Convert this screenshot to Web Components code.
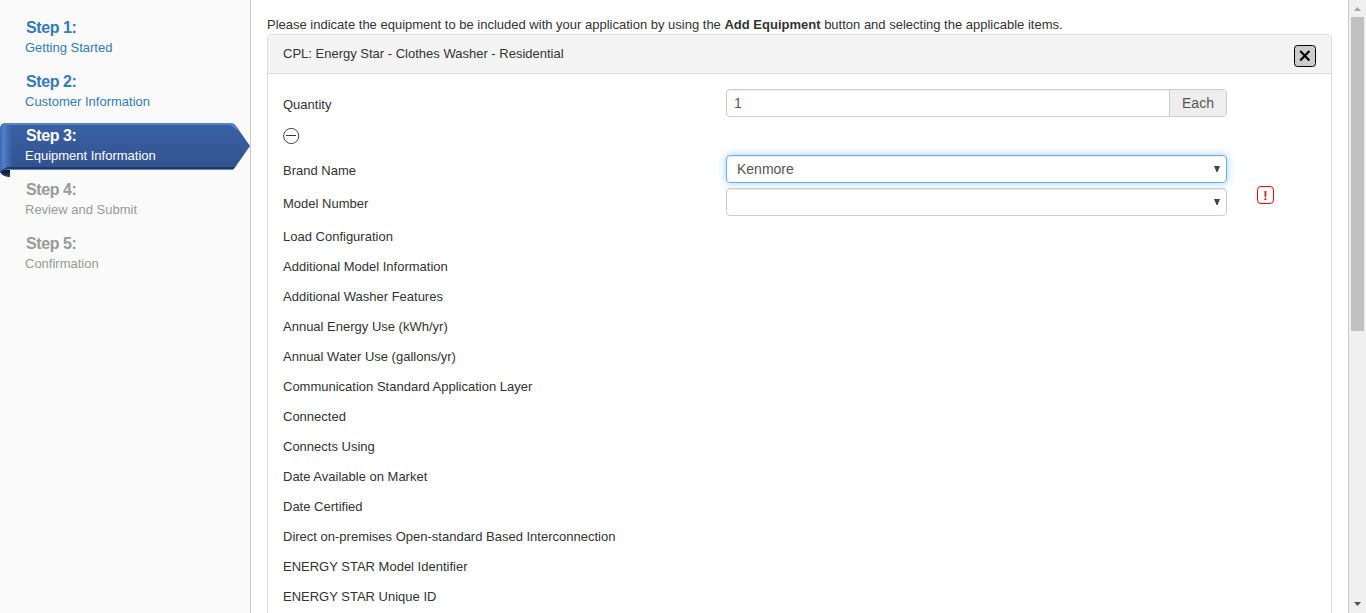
<!DOCTYPE html>
<html lang="en">
<head>
<meta charset="utf-8">
<title>Equipment Information</title>
<style>
html,body{margin:0;height:100%;overflow:hidden;background:#fff}
body{font:13px/18px "Liberation Sans",Arial,sans-serif;color:#333}
</style>
</head>
<body>
<application-page></application-page>
<script>
const define = (name, html) => {
  const template = document.createElement('template');
  template.innerHTML = html;
  customElements.define(name, class extends HTMLElement {
    constructor() {
      super();
      this.attachShadow({mode: 'open'}).append(template.content.cloneNode(true));
    }
  });
};

define('wizard-step', `
<style>
:host{display:block;position:relative;height:54px;color:#337ab7}
:host([pending]){color:#999}
:host([active]){color:#fff}
.text{position:relative;padding:3px 0 0 25px}
.title{display:block;font-weight:bold;font-size:16px;letter-spacing:-.4px;line-height:20px;height:20px;padding-left:1px}
.name{display:block;line-height:20px}
svg{display:none}
:host([active]) svg{display:block;position:absolute;left:0;top:-1px}
</style>
<svg width="250" height="55" viewBox="0 0 250 55">
  <defs>
    <linearGradient id="face" x2="0" y2="1"><stop offset="0" stop-color="#3a62a5"/><stop offset="1" stop-color="#30508c"/></linearGradient>
    <linearGradient id="curl"><stop offset="0" stop-color="#3e68b0"/><stop offset=".25" stop-color="#5280cb"/><stop offset=".6" stop-color="#4470b8" stop-opacity=".8"/><stop offset="1" stop-color="#365d9f" stop-opacity="0"/></linearGradient>
    <linearGradient id="fold" x2="0" y2="1"><stop offset="0" stop-color="#050d18"/><stop offset="1" stop-color="#29446f"/></linearGradient>
  </defs>
  <path d="M0 47H10V55H8Q2 54 0 50Z" fill="url(#fold)"/>
  <path d="M5 1H231Q234 1 236 4L250 24L236 44Q234 48 231 48H7Q2 48 0 51V6Q1 1 5 1Z" fill="url(#face)"/>
  <path d="M0 6Q1 2 5 2H14V46H6Q2 46 0 50Z" fill="url(#curl)"/>
  <path d="M4 2H231L237 7" fill="none" stroke="#5684cf" stroke-width="2"/>
  <path d="M7 45H235L233 47H5Z" fill="#203b68"/>
  <path d="M7 47.500H232" stroke="#6684b7"/>
</svg>
<div class="text"><slot class="title" name="title"></slot><slot class="name"></slot></div>`);

define('wizard-nav', `
<style>
:host{display:block;box-sizing:border-box;width:251px;flex:none;background:#fafafa;border-right:1px solid #ccc;padding-top:15px}
</style><slot></slot>`);

define('quantity-input', `
<style>
:host{display:flex;box-sizing:border-box;height:28px;border:1px solid #ccc;border-radius:4px;overflow:hidden;font-size:14px;line-height:26px;color:#555}
.value{flex:1;padding-left:7px;box-shadow:inset 0 1px 1px rgba(0,0,0,.075)}
.unit{box-sizing:border-box;width:57px;background:#eee;border-left:1px solid #ccc;text-align:center}
</style><span class="value"><slot></slot></span><span class="unit"><slot name="unit"></slot></span>`);

define('select-box', `
<style>
:host{display:flex;align-items:center;justify-content:space-between;box-sizing:border-box;height:28px;padding:0 6px 0 10px;border:1px solid #ccc;border-radius:4px;font-size:14px;line-height:26px;color:#555;box-shadow:inset 0 1px 1px rgba(0,0,0,.075)}
:host([focused]){border-color:#66afe9;box-shadow:inset 0 1px 1px rgba(0,0,0,.075),0 0 8px rgba(102,175,233,.6)}
</style><span><slot></slot></span><svg width="6" height="6" viewBox="0 0 6 6"><path d="M0 0H6L3.500 6H2.500Z" fill="#444"/></svg>`);

define('form-row', `
<style>
:host{display:grid;grid-template-columns:443px 501px;height:30px;align-items:center}
:host([control]){height:28px;margin-bottom:5px}
.label{line-height:18px;padding-top:2px}
:host([control]) .label{padding-top:4px}
:host([control]){grid-template-rows:28px}
</style><span class="label"><slot></slot></span><slot name="control"></slot>`);

define('collapse-toggle', `
<style>:host{display:flex;height:33px;padding-top:6px;box-sizing:border-box}</style>
<svg width="17" height="17" viewBox="0 0 17 17"><circle cx="8.200" cy="8" r="7.600" fill="none" stroke="#333" stroke-width=".9"/><path d="M3 7.500H13" stroke="#333"/></svg>`);

define('close-button', `
<style>:host{display:block;width:22px;height:22px}svg{display:block}</style>
<svg width="22" height="22" viewBox="0 0 22 22"><rect x=".500" y=".500" width="21" height="21" rx="3" fill="#ccc" stroke="#000"/><path d="M6.200 6L15.400 15.500M15.400 6L6.200 15.500" stroke="#000" stroke-width="2.100"/></svg>`);

define('required-mark', `
<style>:host{position:absolute;left:989px;top:151px;box-sizing:border-box;width:17px;height:18px;border:1px solid #f00;border-radius:4px;color:#b02a3a;font-size:13px;font-weight:bold;line-height:17px;text-align:center}</style><slot></slot>`);

define('equipment-panel', `
<style>
:host{display:block;position:relative;box-sizing:border-box;height:700px;border:1px solid #ddd;border-radius:4px}
header{display:flex;justify-content:space-between;align-items:flex-start;box-sizing:border-box;height:39px;padding:10px 15px 0;background:#f4f4f4;border-bottom:1px solid #ddd;border-radius:3px 3px 0 0}
.body{padding:15px}
</style>
<header><span><slot name="heading"></slot></span><close-button></close-button></header>
<div class="body"><slot></slot></div>`);

define('page-scrollbar', `
<style>
:host{display:flex;flex-direction:column;box-sizing:border-box;width:18px;flex:none;background:#f0f0f0;border-left:1px solid #ccc}
.thumb{height:314px;width:13px;margin-left:2px;background:#c1c1c1}
.space{flex:1}
svg{display:block;flex:none}
</style>
<svg width="17" height="17"><path d="M5 11L8.500 7L12 11Z" fill="#a3a3a3"/></svg><div class="thumb"></div><div class="space"></div>
<svg width="17" height="17"><path d="M5 6H12L8.500 10Z" fill="#505050"/></svg>`);

const fields = ['Load Configuration', 'Additional Model Information', 'Additional Washer Features', 'Annual Energy Use (kWh/yr)', 'Annual Water Use (gallons/yr)', 'Communication Standard Application Layer', 'Connected', 'Connects Using', 'Date Available on Market', 'Date Certified', 'Direct on-premises Open-standard Based Interconnection', 'ENERGY STAR Model Identifier', 'ENERGY STAR Unique ID'];

define('application-page', `
<style>
:host{display:flex;height:613px;overflow:hidden}
main{flex:1;min-width:0;padding:15px 16px 0}
p{margin:0;height:19px;line-height:19px}
</style>
<wizard-nav>
<wizard-step><span slot="title">Step 1:</span>Getting Started</wizard-step>
<wizard-step><span slot="title">Step 2:</span>Customer Information</wizard-step>
<wizard-step active><span slot="title">Step 3:</span>Equipment Information</wizard-step>
<wizard-step pending><span slot="title">Step 4:</span>Review and Submit</wizard-step>
<wizard-step pending><span slot="title">Step 5:</span>Confirmation</wizard-step>
</wizard-nav>
<main>
<p>Please indicate the equipment to be included with your application by using the <b>Add Equipment</b> button and selecting the applicable items.</p>
<equipment-panel>
<span slot="heading">CPL: Energy Star - Clothes Washer - Residential</span>
<form-row control>Quantity<quantity-input slot="control">1<span slot="unit">Each</span></quantity-input></form-row>
<collapse-toggle></collapse-toggle>
<form-row control>Brand Name<select-box slot="control" focused>Kenmore</select-box></form-row>
<form-row control>Model Number<select-box slot="control"></select-box></form-row>
${fields.map(f => `<form-row>${f}</form-row>`).join('')}
<required-mark>!</required-mark>
</equipment-panel>
</main>
<page-scrollbar></page-scrollbar>`);
</script>
</body>
</html>
